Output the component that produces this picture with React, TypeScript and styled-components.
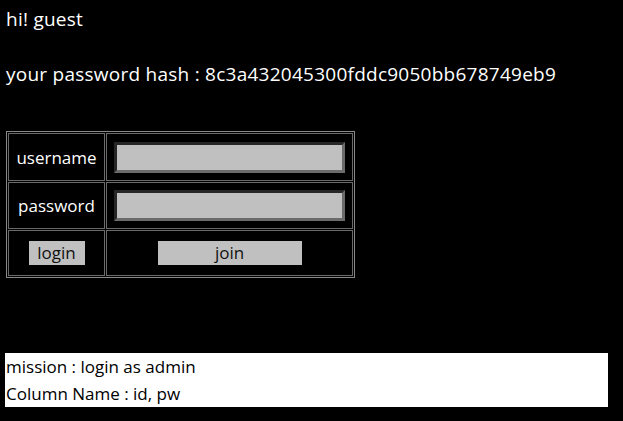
import styled, { createGlobalStyle } from 'styled-components';

const GlobalStyle = createGlobalStyle`
    html, body {
        margin: 0;
        padding: 0;
        background: #000;
    }
    body {
        font-family: "Open Sans", "Noto Sans CJK KR", sans-serif;
        font-size: 17px;
        color: #fff;
    }
`;

const Page = styled.div`
    display: flex;
    flex-direction: column;
    align-items: flex-start;
    padding: 6px 0 0 6px;
`;

const Heading = styled.div<{ $top?: number }>`
    font-size: 19px;
    letter-spacing: 0.25px;
    line-height: 27px;
    margin-top: ${(p) => p.$top ?? 0}px;
    white-space: nowrap;
`;

const Line = styled.div`
    line-height: 27px;
    white-space: nowrap;
`;

const LoginTable = styled.table`
    margin-top: 43px;
    border: 1px solid #888;
    border-spacing: 1px;
    border-collapse: separate;
`;

const Cell = styled.td<{ $w: number; $h: number }>`
    border: 1px solid #6a6a6a;
    width: ${(p) => p.$w}px;
    height: ${(p) => p.$h}px;
    padding: 0;
    text-align: center;
    vertical-align: middle;
    box-sizing: border-box;
`;

const TextInput = styled.input`
    display: block;
    margin: 0 auto;
    width: 231px;
    height: 31px;
    box-sizing: border-box;
    background: #c0c0c0;
    border-style: solid;
    border-width: 3px;
    border-color: #262626 #6b6b6b #6b6b6b #262626;
    padding: 0 4px;
    font: inherit;
    outline: none;
`;

const GrayButton = styled.button<{ $w: number }>`
    width: ${(p) => p.$w}px;
    height: 24px;
    padding: 0;
    border: none;
    background: #c0c0c0;
    color: #111;
    font-family: inherit;
    font-size: 17px;
    line-height: 24px;
    cursor: pointer;
`;

const MissionBox = styled.div`
    margin: 75px 0 0 -1px;
    width: 603px;
    background: #fff;
    color: #000;
    padding-left: 1px;
    box-sizing: border-box;
`;

const App = () => {
	return (
		<>
			<GlobalStyle />
			<Page>
				<Heading>hi! guest</Heading>
				<Heading $top={28}>your password hash : 8c3a432045300fddc9050bb678749eb9</Heading>
				<LoginTable>
					<tbody>
						<tr>
							<Cell $w={97} $h={48}>username</Cell>
							<Cell $w={247} $h={48}>
								<TextInput type="text" name="id" />
							</Cell>
						</tr>
						<tr>
							<Cell $w={97} $h={47}>password</Cell>
							<Cell $w={247} $h={47}>
								<TextInput type="password" name="pw" />
							</Cell>
						</tr>
						<tr>
							<Cell $w={97} $h={46}>
								<GrayButton $w={56}>login</GrayButton>
							</Cell>
							<Cell $w={247} $h={46}>
								<GrayButton $w={144}>join</GrayButton>
							</Cell>
						</tr>
					</tbody>
				</LoginTable>
				<MissionBox>
					<Line>mission : login as admin</Line>
					<Line>Column Name : id, pw</Line>
				</MissionBox>
			</Page>
		</>
	);
};

export default App;
